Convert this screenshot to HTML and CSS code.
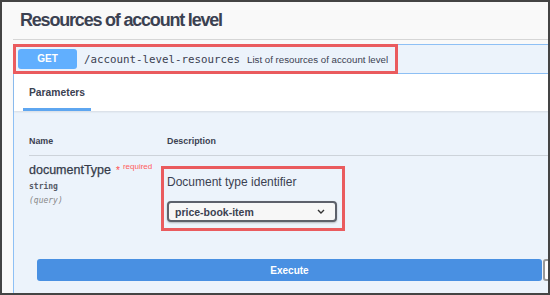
FILE: index.html
```html
<!DOCTYPE html>
<html lang="en">
<head>
    <meta charset="UTF-8">
    <title>Resources of account level</title>
    <link rel="stylesheet" href="styles.css">
</head>
<body>
    <div class="frame">
        <div class="tag-section">
            <h3 class="tag-title">Resources of account level</h3>

            <div class="opblock">
                <div class="summary">
                    <div class="highlight summary-highlight">
                        <span class="method">GET</span>
                        <span class="path">/account-level-resources</span>
                        <span class="summary-desc">List of resources of account level</span>
                    </div>
                </div>

                <div class="section-header">
                    <div class="tab">Parameters</div>
                </div>

                <div class="params">
                    <div class="params-head">
                        <div class="col-name">Name</div>
                        <div class="col-desc">Description</div>
                    </div>
                    <div class="param-row">
                        <div class="col-name param-name">
                            <div class="param-title">documentType<span class="star">*</span><sup class="required">required</sup></div>
                            <div class="param-type">string</div>
                            <div class="param-in">(query)</div>
                        </div>
                        <div class="col-desc param-desc">
                            <div class="highlight desc-highlight">
                                <div class="desc-text">Document type identifier</div>
                                <div class="select">
                                    <span>price-book-item</span>
                                    <svg class="chevron" width="8" height="5" viewBox="0 0 8 5">
                                        <polyline points="1,1 4,4 7,1" fill="none" stroke="#333" stroke-width="1.4"/>
                                    </svg>
                                </div>
                            </div>
                        </div>
                    </div>
                    <div class="btn-group">
                        <button class="execute">Execute</button>
                        <button class="clear" aria-label="Clear"></button>
                    </div>
                </div>
            </div>
        </div>
    </div>
</body>
</html>
```

FILE: styles.css
```css
body {
    margin: 0;
    padding: 0;
    font-family: "Liberation Sans", Arial, sans-serif;
    color: #3b4151;
}
.frame {
    width: 550px;
    height: 295px;
    box-sizing: border-box;
    border: 2px solid #444;
    background-color: #f9f9f9;
    overflow: hidden;
}
.tag-section {
    margin-left: 11px;
    width: 560px;
}
.tag-title {
    margin: 0;
    padding: 0 0 0 7px;
    height: 38px;
    line-height: 36px;
    font-size: 18px;
    font-weight: bold;
    letter-spacing: -1.2px;
    border-bottom: 1px solid #d6d6d6;
    box-sizing: border-box;
}
.opblock {
    margin-top: 4px;
    border: 1px solid #8ec0f5;
    border-right: none;
    background-color: #ecf3fb;
}
.summary {
    display: flex;
    border-bottom: 1px solid #8ec0f5;
}
.highlight {
    border: 3px solid #ea5b5e;
}
.summary-highlight {
    display: flex;
    align-items: center;
    margin: -1px 0 -1px -1px;
    height: 24px;
    padding: 0 7px 0 2px;
}
.method {
    width: 59px;
    height: 20px;
    line-height: 20px;
    text-align: center;
    background-color: #61affe;
    color: white;
    font-size: 10px;
    font-weight: bold;
    border-radius: 3px;
}
.path {
    margin-left: 7px;
    font-family: "DejaVu Sans Mono", monospace;
    font-size: 10.8px;
    color: #3b4151;
}
.summary-desc {
    margin-left: 7px;
    font-size: 9.7px;
    color: #3b4151;
}
.section-header {
    height: 37px;
    padding-left: 9px;
    background-color: white;
    box-shadow: 0 1px 2px rgba(0, 0, 0, 0.1);
    position: relative;
}
.tab {
    display: inline-block;
    padding: 12px 6px 0;
    line-height: 13px;
    font-size: 10.3px;
    font-weight: bold;
}
.tab::after {
    content: "";
    display: block;
    height: 3px;
    margin: 9px -6px 0;
    background-color: #5ea6f0;
}
.params {
    padding: 24px 0 40px 15px;
}
.params-head {
    display: flex;
    padding-bottom: 8px;
    border-bottom: 1px solid #cdd3da;
    font-size: 8.9px;
    font-weight: bold;
    line-height: 12px;
}
.col-name {
    width: 138px;
    flex-shrink: 0;
}
.param-row {
    display: flex;
}
.param-name {
    padding-top: 7px;
}
.param-title {
    font-size: 12.5px;
    line-height: 15px;
    color: #353b4a;
    -webkit-text-stroke: 0.25px #353b4a;
}
.star {
    margin-left: 5px;
    color: #ff4d4d;
    font-size: 10px;
    -webkit-text-stroke: 0;
}
.required {
    margin-left: 3px;
    color: #ff5c5c;
    font-size: 8px;
    vertical-align: 5px;
    line-height: 0;
    -webkit-text-stroke: 0;
}
.param-type {
    margin-top: 3px;
    font-family: "DejaVu Sans Mono", monospace;
    font-size: 8px;
    font-weight: bold;
    line-height: 11px;
    color: #555a66;
}
.param-in {
    margin-top: 3px;
    font-family: "DejaVu Sans Mono", monospace;
    font-size: 8px;
    font-style: italic;
    line-height: 11px;
    color: #888;
}
.param-desc {
    padding-top: 10px;
    margin-left: -6px;
}
.desc-highlight {
    width: 170px;
    padding: 6px 5px 6px 3px;
}
.desc-text {
    font-size: 12px;
    line-height: 14px;
    margin-bottom: 12px;
}
.select {
    display: flex;
    align-items: center;
    justify-content: space-between;
    box-sizing: border-box;
    width: 170px;
    height: 21px;
    padding: 0 10px 0 6px;
    border: 2px solid #5d616b;
    border-radius: 4px;
    background-color: #f7f7f7;
    box-shadow: 0 1px 2px rgba(0, 0, 0, 0.25);
    font-size: 10.5px;
    font-weight: bold;
}
.btn-group {
    display: flex;
    margin: 28px 0 0 8px;
}
.execute {
    flex-shrink: 0;
    width: 505px;
    height: 22px;
    margin-right: 1px;
    border: none;
    border-radius: 3px;
    background-color: #4990e2;
    color: white;
    font-family: "Liberation Sans", Arial, sans-serif;
    font-size: 10px;
    font-weight: bold;
}
.clear {
    flex-shrink: 0;
    width: 100px;
    height: 22px;
    border: 2px solid #999;
    border-radius: 3px;
    background-color: white;
}
```
